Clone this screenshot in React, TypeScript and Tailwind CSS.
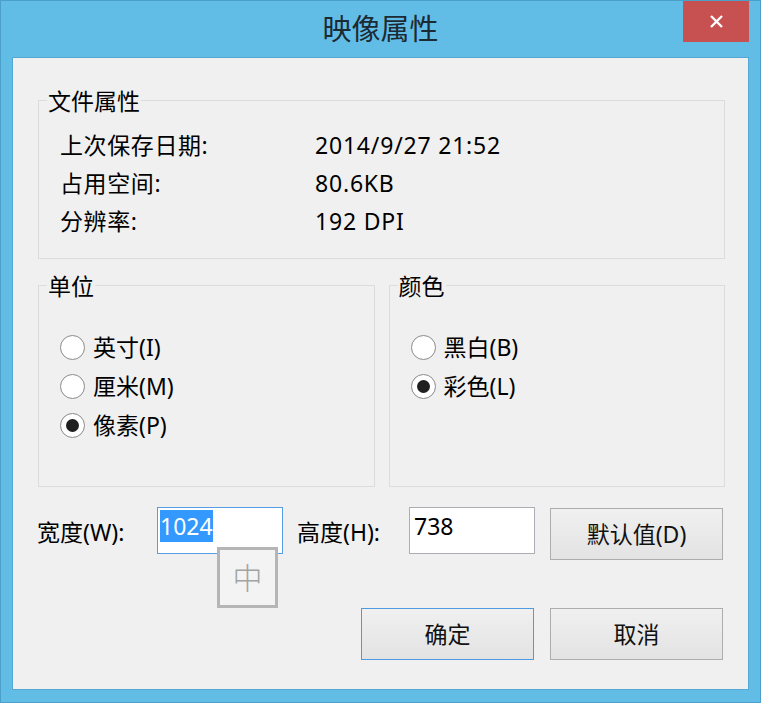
import React from 'react'

const FONT = { fontFamily: '"Noto Sans", "Noto Sans CJK SC", sans-serif' }

// ─── Pieces ───────────────────────────────────────────────────────────────────

function Group({ title, className, children }: { title: string; className?: string; children: React.ReactNode }) {
  return (
    <div className={'border border-[#dcdcdc] ' + (className ?? '')}>
      <div className="-mt-[13px] ml-[8px] w-fit bg-[#f0f0f0] px-px text-[23px] leading-[26px]">{title}</div>
      {children}
    </div>
  )
}

function Radio({ label, checked }: { label: string; checked?: boolean }) {
  return (
    <div className="flex h-[39px] items-center gap-[8px]">
      <span className="flex h-[25px] w-[25px] items-center justify-center rounded-full border border-[#8a8a8a] bg-white">
        {checked && <span className="h-[13px] w-[13px] rounded-full bg-[#1f1f1f]" />}
      </span>
      <span className="text-[23px] leading-[39px]">{label}</span>
    </div>
  )
}

function Button({ label, primary, className }: { label: string; primary?: boolean; className?: string }) {
  return (
    <button
      className={
        'flex h-[52px] w-[173px] items-center justify-center border bg-gradient-to-b from-[#f0f0f0] to-[#e3e3e3] text-[23px] text-[#111] ' +
        (primary ? 'border-[#4d9be0] ' : 'border-[#adadad] ') +
        (className ?? '')
      }
    >
      {label}
    </button>
  )
}

// ─── Dialog ───────────────────────────────────────────────────────────────────

const INFO = [
  ['上次保存日期:', '2014/9/27 21:52'],
  ['占用空间:', '80.6KB'],
  ['分辨率:', '192 DPI'],
]

export default function App() {
  return (
    <div style={FONT} className="flex h-[703px] w-[761px] flex-col border border-[#4b9fcb] bg-[#62bde6] text-black">
      {/* Title bar */}
      <div className="grid h-[56px] shrink-0 grid-cols-[1fr_auto_1fr]">
        <div />
        <div className="pt-[8px] text-[29px] leading-[40px] text-[#1c2a33]">映像属性</div>
        <div className="flex justify-end pr-[11px]">
          <button className="flex h-[41px] w-[66px] items-center justify-center bg-[#c75050]">
            <svg width="15" height="15" viewBox="0 0 15 15">
              <path d="M2 2 L13 13 M13 2 L2 13" stroke="white" strokeWidth="2.4" />
            </svg>
          </button>
        </div>
      </div>

      {/* Body */}
      <div className="mx-[11px] flex h-[633px] flex-col border border-[#55a8d3] bg-[#f0f0f0] pl-[25px] pr-[23px] pt-[42px]">
        <Group title="文件属性" className="pb-[18px]">
          <div className="mt-[12px] pl-[21px] text-[23px] leading-[38px]">
            {INFO.map(([k, v]) => (
              <div key={k} className="flex">
                <span className="w-[255px] tracking-[0.6px]">{k}</span>
                <span className="tracking-[0.8px]">{v}</span>
              </div>
            ))}
          </div>
        </Group>

        <div className="mt-[26px] grid grid-cols-2 gap-[14px]">
          <Group title="单位" className="h-[202px]">
            <div className="mt-[29px] pl-[21px]">
              <Radio label="英寸(I)" />
              <Radio label="厘米(M)" />
              <Radio label="像素(P)" checked />
            </div>
          </Group>
          <Group title="颜色" className="h-[202px]">
            <div className="mt-[29px] pl-[21px]">
              <Radio label="黑白(B)" />
              <Radio label="彩色(L)" checked />
            </div>
          </Group>
        </div>

        {/* Size row */}
        <div className="mt-[20px] flex items-start">
          <span className="-ml-px w-[120px] pt-[2px] text-[23px] leading-[47px]">宽度(W):</span>
          <div className="relative">
            <div className="h-[47px] w-[126px] border border-[#569de5] bg-white pl-[2px] pt-[4px] text-[23px] leading-[29px]">
              <span className="bg-[#3399ff] text-white">1024</span>
            </div>
            {/* IME candidate hint */}
            <div className="absolute left-[60px] top-[40px] flex h-[61px] w-[61px] items-center justify-center border-[3px] border-[#b5b5b5] bg-[#f3f3f3] text-[30px] font-light text-[#a3a3a3]">
              中
            </div>
          </div>
          <span className="ml-[14px] w-[112px] pt-[2px] text-[23px] leading-[47px]">高度(H):</span>
          <div className="h-[47px] w-[126px] border border-[#abadb3] bg-white pl-[4px] pt-[4px] text-[23px] leading-[29px]">738</div>
          <Button label="默认值(D)" className="ml-[15px] mt-px" />
        </div>

        <div className="mt-[48px] flex justify-end gap-[16px] pr-[2px]">
          <Button label="确定" primary />
          <Button label="取消" />
        </div>
      </div>
    </div>
  )
}
